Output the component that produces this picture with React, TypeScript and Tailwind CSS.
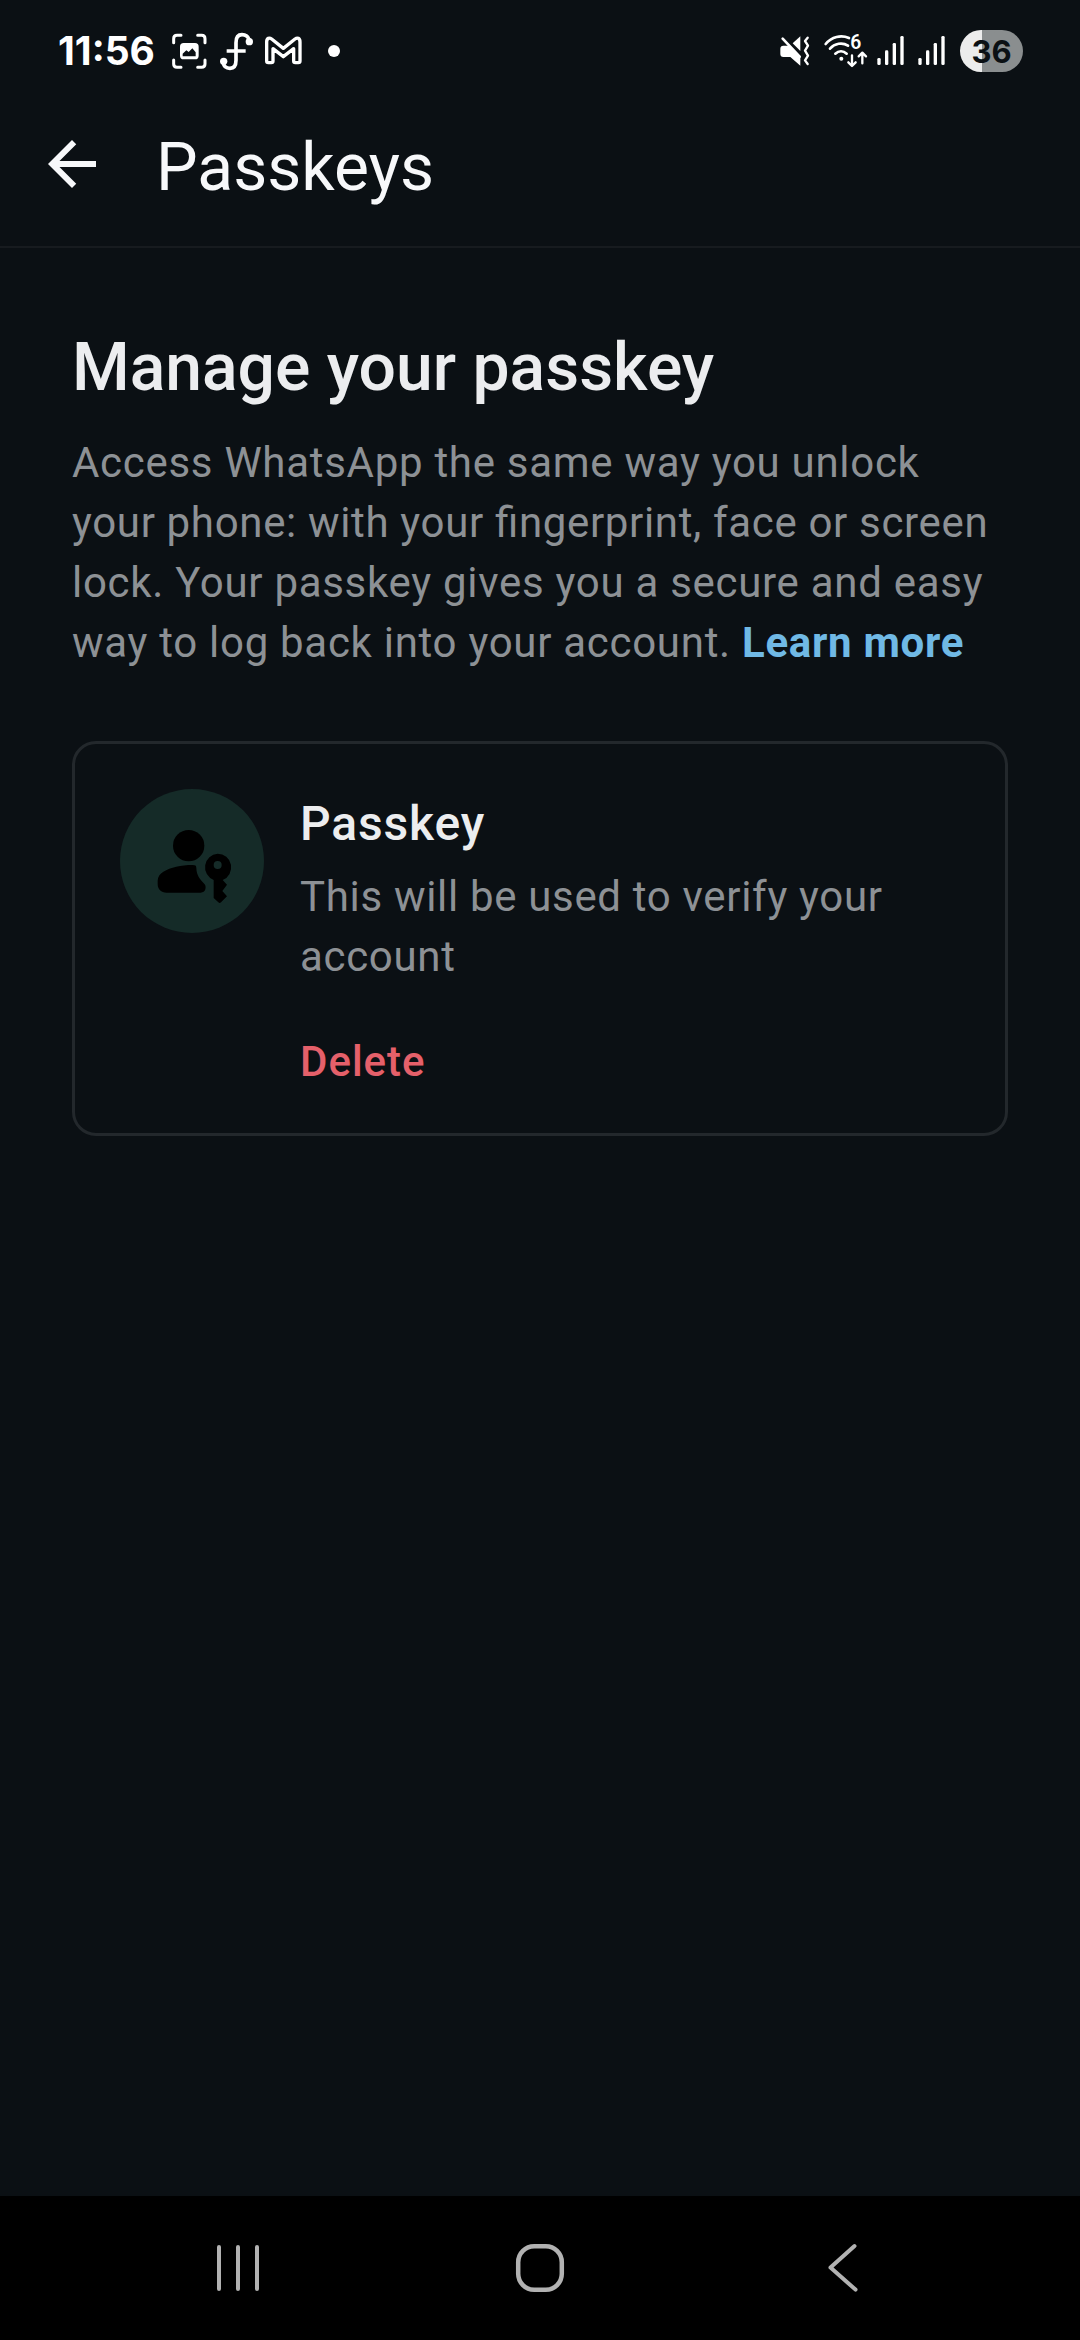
function ScreenshotIcon() {
  return (
    <svg className="ml-[18px] h-16 w-[37px] shrink-0" viewBox="393 0 111 192" fill="none">
      <path
        d="M401 68V56q0-10 10-10h12M473 46h12q10 0 10 10v12M495 120v12q0 10-10 10h-12M423 142h-12q-10 0-10-10v-12"
        stroke="#fff"
        strokeWidth="9"
        strokeLinecap="round"
      />
      <path
        fill="#fff"
        fillRule="evenodd"
        d="M431 69h34q11 0 11 11v27q0 11-11 11h-34q-11 0-11-11V80q0-11 11-11ZM428 109h39v-12l-10-12-11 11-7-5-11 10Z"
      />
    </svg>
  );
}

function ScriptFIcon() {
  return (
    <svg className="ml-[11px] h-16 w-[35px] shrink-0" viewBox="537 0 105 192" fill="none">
      <path
        d="M628 60C624 48 616 44 606 44C594 44 588 53 588 68V121C588 136 582 145 570 145C558 145 551 138 550 128M560 93H617"
        stroke="#fff"
        strokeWidth="11"
      />
      <circle cx="628" cy="65" r="11" fill="#fff" />
      <circle cx="551" cy="124" r="11" fill="#fff" />
    </svg>
  );
}

function MailIcon() {
  return (
    <svg className="ml-2.5 h-16 w-[39px] shrink-0" viewBox="672 0 117 192" fill="none">
      <path
        d="M680 66C680 54 688 52 695 57L730 85L765 57C772 52 780 54 780 66V123Q780 128 775 128H766Q761 128 761 123V86L730 110L699 86V123Q699 128 694 128H685Q680 128 680 123Z"
        stroke="#fff"
        strokeWidth="10"
        strokeLinejoin="round"
      />
    </svg>
  );
}

function MuteIcon() {
  return (
    <svg className="h-16 w-[34px] shrink-0" viewBox="54 0 102 192" fill="none">
      <path d="M121 49V93L98 70Z" fill="#fff" />
      <path d="M70 77H87L121 112V137L91 111H70Q61 111 61 102V86Q61 77 70 77Z" fill="#fff" />
      <path d="M68 56L119 110" stroke="#fff" strokeWidth="8" strokeLinecap="round" />
      <path
        d="M143 53L135 63L144 77L135 92L144 107L135 121L143 132"
        stroke="#fff"
        strokeWidth="7"
        strokeLinecap="round"
        strokeLinejoin="round"
      />
    </svg>
  );
}

function WifiIcon() {
  return (
    <svg className="ml-[11px] h-16 w-[46px] shrink-0" viewBox="189 0 138 192" fill="none">
      <g stroke="#fff" strokeWidth="8" strokeLinecap="round">
        <path d="M197 72C215 50 243 44 267 54" />
        <path d="M210 86C224 70 247 66 264 77" />
        <path d="M226 101C236 92 250 92 260 101" />
      </g>
      <circle cx="244" cy="116" r="6" fill="#fff" />
      <text x="271" y="88" fill="#fff" className="font-['Roboto',sans-serif] text-[58px] font-semibold">
        6
      </text>
      <g stroke="#fff" strokeWidth="7" strokeLinecap="round" strokeLinejoin="round">
        <path d="M276 106V137M265 127L276 138L287 127" />
        <path d="M307 130V99M296 109L307 98L318 109" />
      </g>
    </svg>
  );
}

function SignalIcon({ className }: { className: string }) {
  return (
    <svg className={className} viewBox="348 0 87 192" fill="#fff">
      <rect x="352" y="114" width="10" height="21" rx="4" />
      <rect x="375" y="91" width="10" height="44" rx="4" />
      <rect x="398" y="69" width="10" height="66" rx="4" />
      <rect x="421" y="48" width="10" height="87" rx="4" />
    </svg>
  );
}

function StatusBar() {
  return (
    <div className="flex h-[128px] items-start pt-5 pl-[58px] pr-[57px] font-['Inter',sans-serif] font-bold text-white">
      <span className="w-[95px] text-[39px] leading-[61px] whitespace-nowrap">11:56</span>
      <ScreenshotIcon />
      <ScriptFIcon />
      <MailIcon />
      <span className="mt-[25px] ml-[25px] size-3 rounded-full bg-white" />
      <div className="ml-auto flex">
        <MuteIcon />
        <WifiIcon />
        <SignalIcon className="ml-[7px] h-16 w-[29px] shrink-0" />
        <SignalIcon className="ml-3 h-16 w-[29px] shrink-0" />
        <div className="mt-2.5 ml-3.5 flex h-[42px] w-[63px] items-center justify-center rounded-full bg-linear-to-r from-[#ececec] from-[35%] to-[#8a8e8f] to-[35%] text-[31px] leading-none text-[#0b1014]">
          36
        </div>
      </div>
    </div>
  );
}

function PasskeyIcon() {
  return (
    <svg className="size-36 shrink-0 rounded-full bg-[#152b28]" viewBox="180 177 432 432" fill="#000">
      <circle cx="386" cy="347" r="47" />
      <path d="M293 452C293 440 300 431 310 425C332 412 362 405 398 405C406 405 409 407 409 414C410 437 419 446 434 463C440 471 437 488 422 488H320C303 488 293 478 293 462Z" />
      <path
        fillRule="evenodd"
        d="M473 371A41 41 0 0 1 488 450L501 464L487 483L501 499L483 517Q479 521 475 517L461 504V450A41 41 0 0 1 473 371ZM473 393A12 12 0 1 0 473 417A12 12 0 1 0 473 393Z"
      />
    </svg>
  );
}

function PasskeyCard() {
  return (
    <section className="mt-[68px] flex h-[395px] gap-9 rounded-3xl border-[3px] border-[#23282c] p-[45px]">
      <PasskeyIcon />
      <div className="pt-[7px]">
        <h2 className="text-[48px] leading-[56px] font-medium tracking-[0.85px] text-[#ecedef]">Passkey</h2>
        <p className="mt-[15px] leading-[60px] tracking-[0.68px] text-[#8d9195]">
          This will be used to verify your
          <br />
          account
        </p>
        <button className="mt-[45px] block leading-[60px] font-medium tracking-[1px] text-[#e5606a]">Delete</button>
      </div>
    </section>
  );
}

function NavBar() {
  return (
    <nav className="flex h-36 items-center justify-between bg-black px-[202px]">
      <svg className="size-[72px]" viewBox="0 0 72 72" fill="none" stroke="#b2b2b2" strokeWidth="4" strokeLinecap="round">
        <path d="M17 15V57M36 15V57M55 15V57" />
      </svg>
      <svg className="size-[72px]" viewBox="0 0 72 72" fill="none" stroke="#b2b2b2" strokeWidth="4.5">
        <rect x="14.2" y="14.2" width="43.6" height="43.6" rx="16" />
      </svg>
      <svg className="size-[72px]" viewBox="0 0 72 72" fill="none" stroke="#b2b2b2" strokeWidth="4" strokeLinecap="round" strokeLinejoin="round">
        <path d="M48.5 14L24.5 35.6L49.5 57.6" />
      </svg>
    </nav>
  );
}

export default function App() {
  return (
    <div className="flex h-[2340px] w-[1080px] flex-col bg-[#0b1014] font-['Roboto',sans-serif] text-[42px]">
      <StatusBar />
      <header className="flex h-[120px] items-start border-b-2 border-[#171b1f] pl-9 text-[#f7f8fa]">
        <svg className="size-[72px]" viewBox="0 0 24 24" fill="currentColor">
          <path d="M20 11H7.83l5.59-5.59L12 4l-8 8 8 8 1.41-1.41L7.83 13H20v-2z" />
        </svg>
        <h1 className="ml-12 text-[66px] leading-[80px]">Passkeys</h1>
      </header>
      <main className="flex-1 px-[72px] pt-[81px]">
        <h2 className="text-[66px] leading-[78px] font-medium text-[#ecedef]">Manage your passkey</h2>
        <p className="mt-[26px] leading-[60px] tracking-[0.71px] whitespace-nowrap text-[#8d9195] [font-feature-settings:'liga'_1]">
          Access WhatsApp the same way you unlock
          <br />
          <span className="tracking-[0.66px]">your phone: with your fingerprint, face or screen</span>
          <br />
          lock. Your passkey gives you a secure and easy
          <br />
          way to log back into your account. <a className="font-bold text-[#70b9e5]">Learn more</a>
        </p>
        <PasskeyCard />
      </main>
      <NavBar />
    </div>
  );
}
